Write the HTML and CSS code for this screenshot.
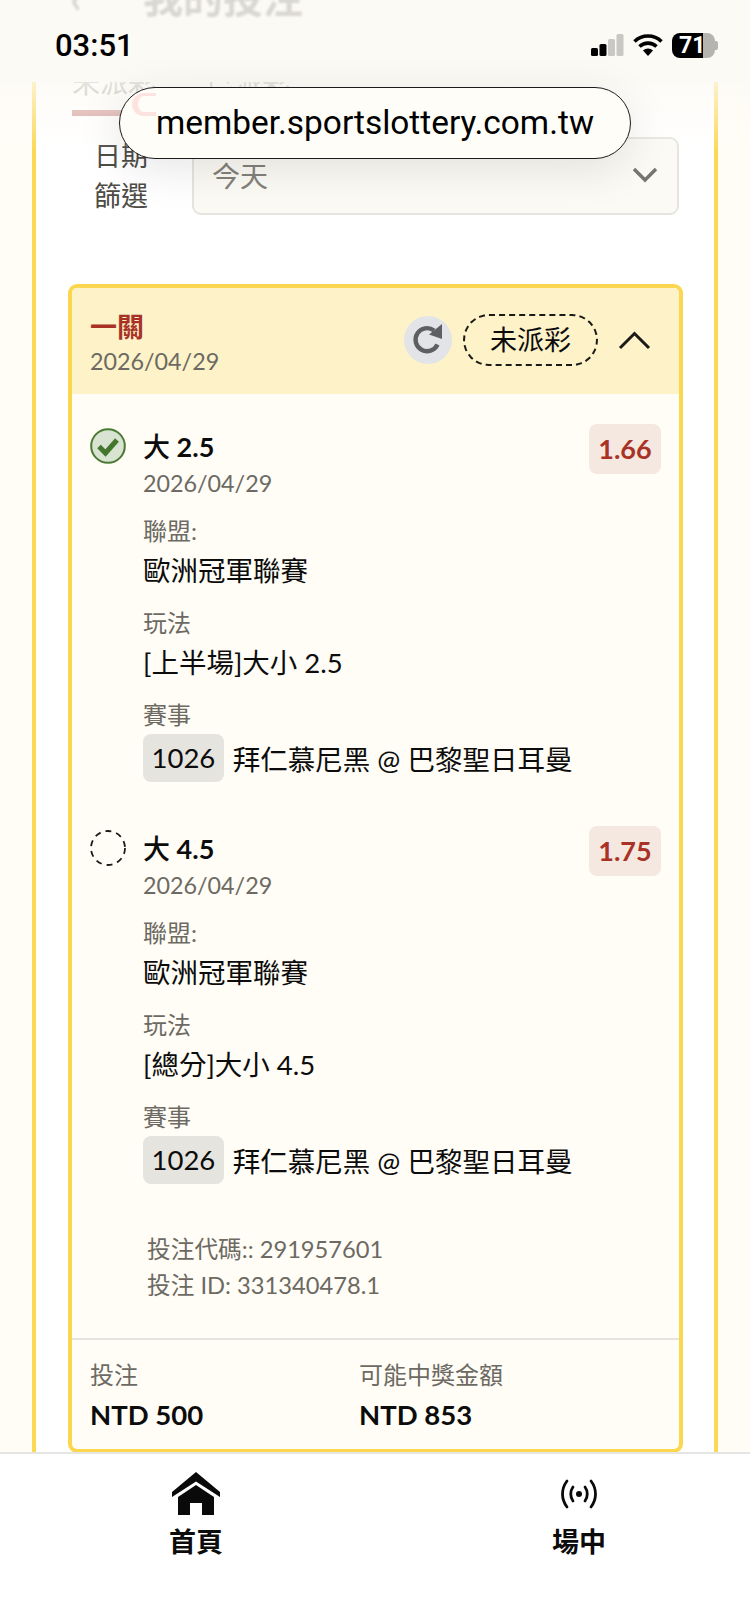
FILE: index.html
```html
<!DOCTYPE html>
<html lang="zh-Hant">
<head>
    <meta charset="UTF-8">
    <meta name="viewport" content="width=device-width, initial-scale=1.0">
    <title>我的投注</title>
    <link rel="stylesheet" href="styles.css">
</head>
<body>
<div class="page">

    <div class="panel">
        <div class="tabs">
            <div class="tab active">未派彩</div>
            <div class="tab">已派彩</div>
        </div>

        <div class="filter">
            <div class="filter-label">日期<br>篩選</div>
            <div class="select">
                <span>今天</span>
                <svg width="26" height="16" viewBox="0 0 26 16"><path d="M2 2l11 11L24 2" fill="none" stroke="#77756e" stroke-width="3.4"/></svg>
            </div>
        </div>

        <div class="card">
            <div class="card-head">
                <div>
                    <div class="card-title">一關</div>
                    <div class="card-date">2026/04/29</div>
                </div>
                <div class="card-actions">
                    <div class="refresh">
                        <svg width="36" height="36" viewBox="0 0 36 36"><path d="M27.5 22.5A11.5 11.5 0 1 1 24 8.5" fill="none" stroke="#5e5f61" stroke-width="4.4"/><path d="M19 12.5L32 2v15z" fill="#5e5f61"/></svg>
                    </div>
                    <div class="status">未派彩</div>
                    <svg class="collapse" width="33" height="19" viewBox="0 0 33 19"><path d="M2 17L16.500 2.500 31 17" fill="none" stroke="#1a1a18" stroke-width="3"/></svg>
                </div>
            </div>

            <div class="card-body">
                <div class="selection">
                    <svg class="mark" width="36" height="36" viewBox="0 0 36 36"><circle cx="18" cy="18" r="16.800" fill="#d9e3d1" stroke="#4a7a33" stroke-width="2"/><path d="M9 18.500l6.500 6.500L27 12" fill="none" stroke="#44762d" stroke-width="5"/></svg>
                    <div class="selection-main">
                        <div class="selection-name"><span class="cjk-medium">大</span> 2.5</div>
                        <div class="selection-date">2026/04/29</div>
                        <div class="field-label">聯盟:</div>
                        <div class="field-value">歐洲冠軍聯賽</div>
                        <div class="field-label">玩法</div>
                        <div class="field-value">[上半場]大小 2.5</div>
                        <div class="field-label">賽事</div>
                        <div class="match"><span class="match-no">1026</span>拜仁慕尼黑 @ 巴黎聖日耳曼</div>
                    </div>
                    <div class="odds">1.66</div>
                </div>

                <div class="selection">
                    <svg class="mark" width="36" height="36" viewBox="0 0 36 36"><circle cx="18" cy="18" r="17" fill="none" stroke="#1a1a18" stroke-width="1.800" stroke-dasharray="6 5"/></svg>
                    <div class="selection-main">
                        <div class="selection-name"><span class="cjk-medium">大</span> 4.5</div>
                        <div class="selection-date">2026/04/29</div>
                        <div class="field-label">聯盟:</div>
                        <div class="field-value">歐洲冠軍聯賽</div>
                        <div class="field-label">玩法</div>
                        <div class="field-value">[總分]大小 4.5</div>
                        <div class="field-label">賽事</div>
                        <div class="match"><span class="match-no">1026</span>拜仁慕尼黑 @ 巴黎聖日耳曼</div>
                    </div>
                    <div class="odds">1.75</div>
                </div>

                <div class="codes">
                    <div>投注代碼:: 291957601</div>
                    <div>投注 ID: 331340478.1</div>
                </div>
            </div>

            <div class="card-foot">
                <div class="foot-col">
                    <div class="foot-label">投注</div>
                    <div class="foot-value">NTD 500</div>
                </div>
                <div class="foot-col">
                    <div class="foot-label">可能中獎金額</div>
                    <div class="foot-value">NTD 853</div>
                </div>
            </div>
        </div>
    </div>

    <!-- Fixed bars sitting over the scrolled page -->
    <div class="statusbar">
        <div class="ghost-title"><span class="ghost-back">‹</span>我的投注</div>
        <div class="status-row">
            <div class="clock">03:51</div>
            <div class="status-icons">
                <svg width="33" height="22" viewBox="0 0 33 22"><rect x="0" y="14" width="7" height="8" rx="1.500" fill="#000"/><rect x="8.500" y="10" width="7" height="12" rx="1.500" fill="#000"/><rect x="17" y="5" width="7" height="17" rx="1.500" fill="#c9c8c4"/><rect x="25.500" y="0" width="7" height="22" rx="1.500" fill="#c9c8c4"/></svg>
                <svg width="30" height="22" viewBox="0 0 30 22"><path d="M1.500 7.500a19.500 19.500 0 0 1 27 0" fill="none" stroke="#000" stroke-width="3.600"/><path d="M6.500 12.500a12.500 12.500 0 0 1 17 0" fill="none" stroke="#000" stroke-width="3.600"/><path d="M15 22l-5-5.500a7 7 0 0 1 10 0z" fill="#000"/></svg>
                <div class="battery">
                    <div class="battery-body"><span>71</span></div>
                    <div class="battery-nub"></div>
                </div>
            </div>
        </div>
    </div>
    <div class="haze"></div>

    <div class="urlbar">
        <div class="urlbar-ghost"></div>
        member.sportslottery.com.tw
    </div>

    <div class="bottomnav">
        <div class="nav-item">
            <svg width="48" height="43" viewBox="0 0 48 43"><path d="M24 0L48 20v5L24 9.500 0 25v-5z" fill="#0a0a0a"/><path d="M6 25L24 13l18 12v18H30V31H18v12H6z" fill="#0a0a0a"/></svg>
            <div class="nav-label">首頁</div>
        </div>
        <div class="nav-item">
            <svg width="38" height="43" viewBox="0 0 38 43"><g fill="none" stroke="#0a0a0a" stroke-width="2.800" stroke-linecap="round"><path d="M7 9c-6 8-6 18 0 26"/><path d="M31 9c6 8 6 18 0 26"/><path d="M13 15c-3 4-3 10 0 14"/><path d="M25 15c3 4 3 10 0 14"/></g><circle cx="19" cy="22" r="3" fill="#0a0a0a"/></svg>
            <div class="nav-label">場中</div>
        </div>
    </div>

</div>
</body>
</html>
```

FILE: styles.css
```css
/* Base Reset */
* {
    margin: 0;
    padding: 0;
    box-sizing: border-box;
}

body {
    font-family: 'Lato', 'Noto Sans CJK TC', sans-serif;
    background: #fffdf6;
    color: #0c0c0c;
}

.page {
    position: relative;
    width: 750px;
    height: 1624px;
    overflow: hidden;
}

/* Page panel */
.panel {
    margin: 0 32px;
    height: 1700px;
    padding: 62px 31px 0 32px;
    background: #fff;
    border-left: 4px solid #fcd854;
    border-right: 4px solid #fcd854;
}

.tabs {
    display: flex;
    gap: 50px;
    height: 75px;
    padding-left: 4px;
}

.tab {
    width: 84px;
    height: 54px;
    font-size: 28px;
    line-height: 40px;
    color: #a5a39c;
    white-space: nowrap;
}

.tab.active {
    border-bottom: 6px solid #d49b98;
}

.filter {
    display: flex;
    align-items: center;
    gap: 44px;
    padding-left: 26px;
    height: 78px;
    margin-bottom: 69px;
}

.filter-label {
    font-size: 27px;
    line-height: 40px;
    color: #4e4c46;
    text-align: center;
}

.select {
    flex: 1;
    height: 78px;
    margin-right: 4px;
    padding: 0 19px 2px 18px;
    display: flex;
    align-items: center;
    justify-content: space-between;
    background: #fbfaf5;
    border: 2px solid #e6e4de;
    border-radius: 9px;
    font-size: 28px;
    color: #83817a;
}

/* Bet card */
.card {
    background: #fffdf6;
    border: 4px solid #fbd750;
    border-radius: 9px;
    overflow: hidden;
}

.card-head {
    display: flex;
    justify-content: space-between;
    height: 106px;
    padding: 22px 28px 0 18px;
    background: #fdf2c8;
}

.card-title {
    font-size: 27px;
    font-weight: 700;
    line-height: 34px;
    color: #a93226;
}

.card-date,
.selection-date {
    font-size: 23.300px;
    line-height: 34px;
    color: #6c6a63;
}

.card-actions {
    display: flex;
    align-items: center;
    height: 52px;
    margin-top: 4px;
}

.refresh {
    display: flex;
    align-items: center;
    justify-content: center;
    width: 48px;
    height: 48px;
    margin-right: 11px;
    background: #e3e4e7;
    border-radius: 50%;
}

.status {
    width: 135px;
    height: 52px;
    border: 2px dashed #1a1a18;
    border-radius: 26px;
    font-size: 27px;
    line-height: 48px;
    text-align: center;
}

.collapse {
    margin-left: 20px;
}

.card-body {
    padding: 30px 18px 35px;
}

.selection {
    display: flex;
    align-items: flex-start;
    margin-bottom: 44px;
}

.mark {
    flex: none;
    margin: 4px 17px 0 0;
}

.selection-main {
    flex: 1;
}

.selection-name {
    font-size: 27px;
    font-weight: 700;
    line-height: 40px;
    margin-top: 3px;
}

.cjk-medium {
    font-weight: 500;
}

.selection-date {
    margin-top: -1px;
}

.field-label {
    font-size: 24px;
    line-height: 34px;
    color: #6c6a63;
    margin-top: 14px;
}

.field-value + .field-label {
    margin-top: 15px;
}

.field-value {
    font-size: 27.500px;
    line-height: 40px;
    margin-top: 3px;
}

.match {
    display: flex;
    align-items: center;
    font-size: 27.500px;
    margin-top: 2px;
}

.match-no {
    height: 48px;
    margin-right: 9px;
    padding: 0 8.500px;
    line-height: 48px;
    background: #e6e4de;
    border-radius: 8px;
}

.odds {
    flex: none;
    width: 72px;
    height: 50px;
    font-size: 27px;
    font-weight: 700;
    line-height: 50px;
    text-align: center;
    color: #a93226;
    background: #f5e8e0;
    border-radius: 8px;
}

.codes {
    padding: 3px 0 0 57px;
    font-size: 23.700px;
    line-height: 36px;
    color: #6c6a63;
}

.card-foot {
    display: flex;
    padding: 18px 18px 14px;
    border-top: 2px solid #e6e4de;
}

.foot-col {
    width: 269px;
}

.foot-label {
    font-size: 24px;
    line-height: 34px;
    color: #6c6a63;
}

.foot-value {
    font-size: 27.500px;
    font-weight: 700;
    line-height: 40px;
    margin-top: 3px;
}

/* Status bar */
.statusbar {
    position: absolute;
    top: 0;
    left: 0;
    width: 100%;
    height: 82px;
    background: #fcfaf4;
    overflow: hidden;
}

.ghost-title {
    position: absolute;
    top: -24px;
    left: 70px;
    font-size: 40px;
    font-weight: 700;
    line-height: 44px;
    color: #d9d7d1;
    filter: blur(1px);
}

.ghost-back {
    display: inline-block;
    width: 73px;
}

.status-row {
    position: relative;
    display: flex;
    justify-content: space-between;
    align-items: center;
    height: 26px;
    margin-top: 32px;
    padding: 0 32px 0 55px;
}

.clock {
    font-family: 'Roboto', sans-serif;
    font-size: 31px;
    font-weight: 500;
    color: #000;
}

.status-icons {
    display: flex;
    align-items: center;
    gap: 9px;
}

.battery {
    display: flex;
    align-items: center;
}

.battery-body {
    width: 43px;
    height: 25px;
    padding-left: 7px;
    border-radius: 8px;
    background: linear-gradient(90deg, #000 72%, #b5b4b0 72%);
    font-family: 'Roboto', sans-serif;
    font-size: 23px;
    font-weight: 700;
    line-height: 25px;
    color: #fff;
}

.battery-nub {
    width: 3px;
    height: 9px;
    background: #b5b4b0;
    border-radius: 0 2px 2px 0;
}

.haze {
    position: absolute;
    top: 82px;
    left: 0;
    width: 100%;
    height: 70px;
    background: linear-gradient(180deg, rgba(252, 250, 244, 0.75), rgba(252, 250, 244, 0));
}

/* URL pill */
.urlbar {
    position: absolute;
    top: 87px;
    left: 119px;
    width: 512px;
    height: 72px;
    background: #fffdf8;
    border: 1.500px solid #1c1c1c;
    border-radius: 36px;
    box-shadow: 0 10px 45px rgba(0, 0, 0, 0.1);
    overflow: hidden;
    font-family: 'Roboto', sans-serif;
    font-size: 33.400px;
    line-height: 70px;
    text-align: center;
    color: #000;
}

.urlbar-ghost {
    position: absolute;
    top: 5px;
    left: 12px;
    width: 24px;
    height: 23px;
    border-left: 6px solid #fde3df;
    border-top: 3px solid #fde3df;
    border-bottom: 4px solid #fde3df;
    border-radius: 50% 0 0 50%;
}

/* Bottom navigation */
.bottomnav {
    position: absolute;
    top: 1452px;
    left: 0;
    display: flex;
    gap: 323px;
    width: 100%;
    height: 172px;
    padding: 18px 0 0 166px;
    background: #fff;
    border-top: 2px solid #e5e5e3;
}

.nav-item {
    display: flex;
    flex-direction: column;
    align-items: center;
    width: 60px;
}

.nav-label {
    margin-top: 7px;
    font-size: 27px;
    font-weight: 700;
    line-height: 40px;
    white-space: nowrap;
}
```
